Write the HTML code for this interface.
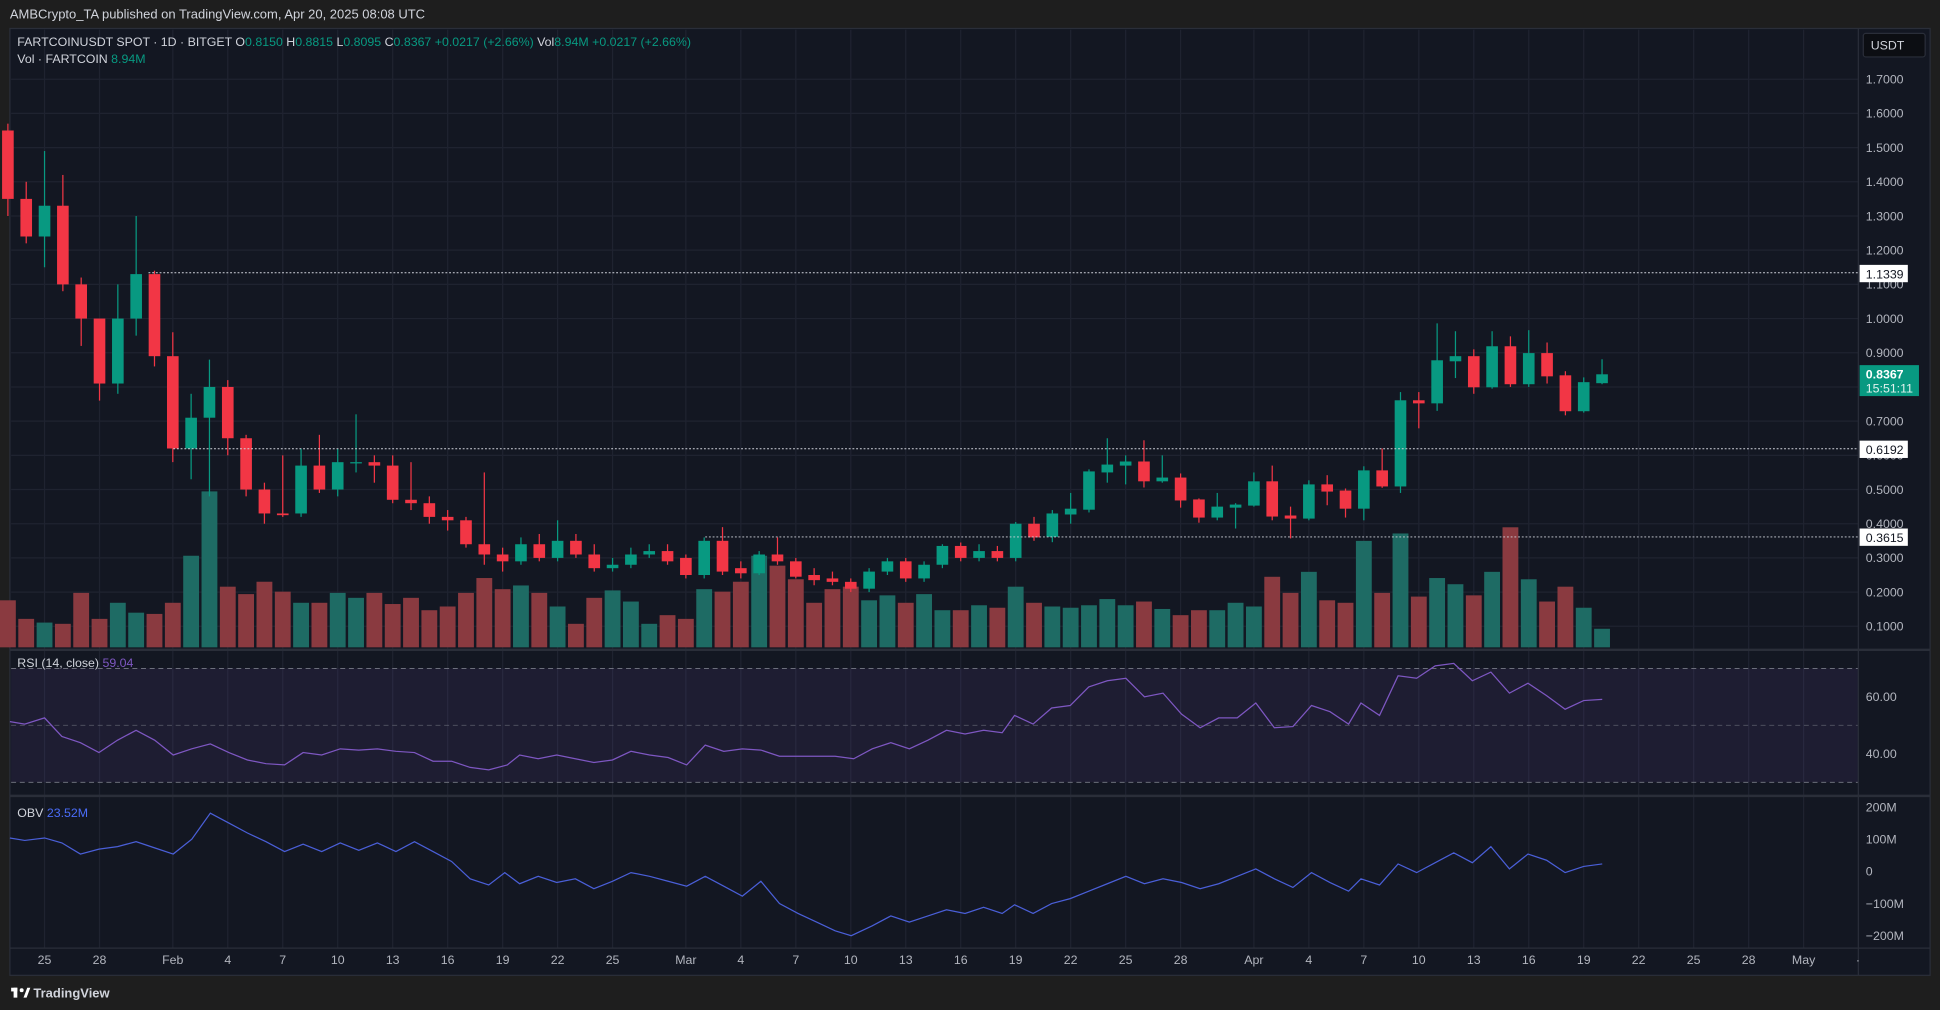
<!DOCTYPE html>
<html><head><meta charset="utf-8"><style>
html,body{margin:0;padding:0;background:#1e1e1e;overflow:hidden}
svg{display:block}
text{font-family:"Liberation Sans",sans-serif}
</style></head><body>
<svg id="s" width="1940" height="1010" viewBox="0 0 1568 816" preserveAspectRatio="none" xmlns="http://www.w3.org/2000/svg">
<rect x="0" y="0" width="1568" height="816" fill="#1e1e1e"/>
<text x="8" y="15" font-size="10.5" fill="#d1d4dc">AMBCrypto_TA published on TradingView.com, Apr 20, 2025 08:08 UTC</text>
<rect x="8" y="23" width="1552" height="765" fill="#131722" stroke="#2a2e39" stroke-width="1"/>
<g id="grid"></g>
<rect x="9" y="540" width="1493" height="92" fill="#7e57c2" fill-opacity="0.1"/>
<line x1="9" y1="540" x2="1502" y2="540" stroke="#787b86" stroke-dasharray="4,3" stroke-width="0.7"/>
<line x1="9" y1="586" x2="1502" y2="586" stroke="#787b86" stroke-dasharray="4,3" stroke-width="0.7" stroke-opacity="0.6"/>
<line x1="9" y1="632" x2="1502" y2="632" stroke="#787b86" stroke-dasharray="4,3" stroke-width="0.7"/>
<line x1="8" y1="525" x2="1560" y2="525" stroke="#2a2e39" stroke-width="2"/>
<line x1="8" y1="643" x2="1560" y2="643" stroke="#2a2e39" stroke-width="2"/>
<line x1="8" y1="766" x2="1560" y2="766" stroke="#2a2e39" stroke-width="1"/>
<line x1="1502" y1="23" x2="1502" y2="788" stroke="#2a2e39" stroke-width="1"/>
<g id="vol"></g>
<g id="cand"></g>
<line x1="120" y1="220.4" x2="1502" y2="220.4" stroke="#d1d4dc" stroke-dasharray="1.5,1.5" stroke-width="0.8"/>
<line x1="140" y1="362.6" x2="1502" y2="362.6" stroke="#d1d4dc" stroke-dasharray="1.5,1.5" stroke-width="0.8"/>
<line x1="570" y1="433.8" x2="1502" y2="433.8" stroke="#d1d4dc" stroke-dasharray="1.5,1.5" stroke-width="0.8"/>
<polyline id="rsi" fill="none" stroke="#7e57c2" stroke-width="1"/>
<polyline id="obv" fill="none" stroke="#4a5fd8" stroke-width="1"/>
<g id="axis" font-size="10" fill="#b2b5be"></g>
<rect x="1506" y="27" width="50" height="19" rx="2" fill="#0c0e13" stroke="#2a2e39"/>
<text x="1512" y="40" font-size="10" fill="#d1d4dc">USDT</text>
<rect x="1503" y="214" width="39" height="14" fill="#ffffff"/><text x="1508" y="225" font-size="10" fill="#131722">1.1339</text>
<rect x="1503" y="356" width="39" height="14" fill="#ffffff"/><text x="1508" y="367" font-size="10" fill="#131722">0.6192</text>
<rect x="1503" y="427" width="39" height="14" fill="#ffffff"/><text x="1508" y="438" font-size="10" fill="#131722">0.3615</text>
<rect x="1503" y="295" width="48" height="25" fill="#089981"/>
<text x="1508" y="306" font-size="10" fill="#fff" font-weight="bold">0.8367</text>
<text x="1508" y="317" font-size="10" fill="#e0f2ef">15:51:11</text>
<text x="14" y="37" font-size="10" fill="#d1d4dc">FARTCOINUSDT SPOT · 1D · BITGET <tspan>O</tspan><tspan fill="#089981">0.8150</tspan> H<tspan fill="#089981">0.8815</tspan> L<tspan fill="#089981">0.8095</tspan> C<tspan fill="#089981">0.8367</tspan> <tspan fill="#089981">+0.0217 (+2.66%)</tspan> Vol<tspan fill="#089981">8.94M</tspan> <tspan fill="#089981">+0.0217 (+2.66%)</tspan></text>
<text x="14" y="51" font-size="10" fill="#d1d4dc">Vol · FARTCOIN <tspan fill="#089981">8.94M</tspan></text>
<text x="14" y="539" font-size="10" fill="#d1d4dc">RSI (14, close) <tspan fill="#7e57c2">59.04</tspan></text>
<text x="14" y="660" font-size="10" fill="#d1d4dc">OBV <tspan fill="#4a6cf7">23.52M</tspan></text>
<g transform="translate(9,797)"><rect x="0" y="1" width="5" height="3" fill="#fff"/><rect x="2" y="1" width="3" height="8" fill="#fff"/><circle cx="8.5" cy="3" r="1.6" fill="#fff"/><path d="M10 9 L13 1 L15.5 1 L12.5 9Z" fill="#fff"/></g>
<text x="27" y="806" font-size="10.5" fill="#d1d4dc" font-weight="bold">TradingView</text>
</svg>
<script>
var NS="http://www.w3.org/2000/svg";
function el(p,t,a){var e=document.createElementNS(NS,t);for(var k in a)e.setAttribute(k,a[k]);document.getElementById(p).appendChild(e);return e;}
function py(p){return 506-(p-0.1)*276.25;}
function dx(d){return 36+d*14.81;}
for(var i=1;i<=17;i++){var p=i/10,y=py(p);el("grid","line",{x1:9,x2:1502,y1:y,y2:y,stroke:"#1f2330","stroke-width":1});
 var t=el("axis","text",{x:1508,y:y+3.5});t.textContent=p.toFixed(4);}
var dates=[[0,"25"],[3,"28"],[7,"Feb"],[10,"4"],[13,"7"],[16,"10"],[19,"13"],[22,"16"],[25,"19"],[28,"22"],[31,"25"],[35,"Mar"],[38,"4"],[41,"7"],[44,"10"],[47,"13"],[50,"16"],[53,"19"],[56,"22"],[59,"25"],[62,"28"],[66,"Apr"],[69,"4"],[72,"7"],[75,"10"],[78,"13"],[81,"16"],[84,"19"],[87,"22"],[90,"25"],[93,"28"],[96,"May"]];
dates.forEach(function(d){var x=dx(d[0]);el("grid","line",{x1:x,x2:x,y1:24,y2:766,stroke:"#1f2330","stroke-width":1});
 var t=el("axis","text",{x:x,y:779,"text-anchor":"middle"});t.textContent=d[1];});
var tt=el("axis","text",{x:1500,y:779});tt.textContent="·";
[[60,563],[40,609]].forEach(function(a){var t=el("axis","text",{x:1508,y:a[1]+3.5});t.textContent=a[0].toFixed(2);});
[["200M",652],["100M",678],["0",704],["−100M",730],["−200M",756]].forEach(function(a){var t=el("axis","text",{x:1508,y:a[1]+3.5});t.textContent=a[0];});
var C=[[1.55,1.35,1.57,1.30],[1.35,1.24,1.40,1.22],[1.24,1.33,1.49,1.15],[1.33,1.10,1.42,1.08],[1.10,1.00,1.12,0.92],[1.00,0.81,1.00,0.76],[0.81,1.00,1.10,0.78],[1.00,1.13,1.30,0.95],[1.13,0.89,1.14,0.86],
[0.89,0.62,0.96,0.58],[0.62,0.71,0.78,0.53],[0.71,0.80,0.88,0.48],[0.80,0.65,0.82,0.60],[0.65,0.50,0.66,0.48],[0.50,0.43,0.52,0.40],[0.43,0.425,0.60,0.42],[0.43,0.57,0.62,0.42],[0.57,0.50,0.66,0.49],[0.50,0.58,0.62,0.48],[0.58,0.58,0.72,0.55],[0.58,0.57,0.60,0.52],[0.57,0.47,0.60,0.46],[0.47,0.46,0.58,0.44],[0.46,0.42,0.48,0.40],[0.42,0.41,0.44,0.38],[0.41,0.34,0.42,0.33],[0.34,0.31,0.55,0.28],[0.31,0.29,0.33,0.26],[0.29,0.34,0.36,0.28],[0.34,0.30,0.37,0.29],[0.30,0.35,0.41,0.29],[0.35,0.31,0.37,0.30],[0.31,0.27,0.34,0.26],[0.27,0.28,0.30,0.26],[0.28,0.31,0.33,0.27],[0.31,0.32,0.34,0.30],[0.32,0.29,0.34,0.28],
[.30,.25,.31,.24],[.25,.35,.36,.24],[.35,.26,.39,.25],[.27,.255,.29,.24],[.255,.31,.32,.25],[.31,.29,.36,.28],[.29,.245,.30,.24],[.25,.235,.27,.22],[.24,.23,.26,.22],[.23,.21,.24,.20],[.21,.26,.27,.20],[.26,.29,.30,.25],[.29,.24,.30,.23],[.24,.28,.29,.23],[.28,.335,.34,.27],[.335,.30,.345,.29],[.30,.32,.34,.29],[.32,.30,.335,.29],[.30,.40,.405,.29],[.40,.36,.42,.35],
[.3615,.43,.44,.346],[.427,.444,.49,.40],[.441,.553,.559,.433],[.55,.573,.65,.52],[.57,.582,.60,.515],[.582,.524,.644,.506],[.524,.535,.60,.52],[.535,.468,.547,.447],[.471,.418,.474,.403],[.418,.45,.49,.41],[.447,.456,.46,.386],[.453,.524,.55,.45],[.524,.421,.57,.41],[.424,.415,.45,.357],[.415,.515,.527,.41],[.515,.494,.542,.454],[.497,.444,.503,.418],[.444,.556,.568,.41],[.556,.509,.62,.505],[.509,.761,.785,.49],
[.761,.752,.785,.679],[.752,.878,.986,.73],[.875,.890,.963,.826],[.890,.799,.91,.78],[.799,.919,.963,.795],[.919,.808,.948,.80],[.808,.899,.966,.80],[.899,.831,.93,.81],[.834,.729,.846,.717],[.729,.814,.828,.725],[.811,.837,.881,.808]];
var V=[38,23,20,19,44,23,36,28,27,36,74,126,49,43,53,45,36,36,44,40,44,35,40,30,33,44,56,47,50,44,33,19,40,46,37,19,26,23,47,45,53,74,66,55,36,47,49,38,42,36,43,30,30,34,32,49,36,33,32,34,39,34,37,31,26,30,30,36,33,57,44,61,38,36,86,44,92,41,56,51,42,61,97,55,37,49,32,15];
var n=C.length;
for(var i=0;i<n;i++){var d=i-2,x=dx(d),c=C[i],up=c[1]>=c[0];
 var v=V[i]!==undefined?V[i]:30;
 el("vol","rect",{x:x-6.4,y:523-v,width:12.8,height:v,fill:up?"#1e6b64":"#8a3a40"});
 var col=up?"#089981":"#f23645";
 el("cand","line",{x1:x,x2:x,y1:py(c[2]),y2:py(c[3]),stroke:col,"stroke-width":1});
 var t=py(Math.max(c[0],c[1])),b=py(Math.min(c[0],c[1]));
 el("cand","rect",{x:x-4.7,y:t,width:9.4,height:Math.max(b-t,1),fill:col});}
var R=[[8,583],[20,585],[36,580],[50,595],[65,600],[80,608],[95,598],[110,590],[125,598],[140,610],[155,605],[170,601],[185,608],[200,614],[215,617],[230,618],[245,608],[260,610],[275,605],[290,606],[305,605],[320,607],[335,608],[350,615],[365,615],[380,620],[395,622],[410,618],[420,610],[435,613],[450,610],[465,613],[480,616],[495,614],[510,607],[525,610],[540,612],[555,618],[570,602],[585,607],[600,605],[615,606],[630,611],[645,611],[660,611],[675,611],[690,613],[705,605],[720,600],[735,605],[750,598],[765,590],[780,593],[795,590],[810,592],[820,578],[835,585],[850,572],[865,570],[880,555],[895,550],[910,548],[925,563],[940,560],[955,577],[970,588],[985,580],[1000,580],[1015,568],[1030,588],[1045,587],[1060,570],[1075,575],[1090,585],[1100,568],[1115,578],[1130,546],[1145,548],[1160,538],[1175,536],[1190,550],[1205,543],[1220,560],[1235,552],[1250,562],[1265,573],[1280,566],[1295,565]];
var O=[[8,677],[20,679],[36,677],[50,681],[65,690],[80,686],[95,684],[110,680],[125,685],[140,690],[155,678],[170,657],[185,665],[200,673],[215,680],[230,688],[245,682],[260,688],[275,681],[290,687],[305,681],[320,688],[335,680],[350,688],[365,696],[380,710],[395,715],[408,705],[420,714],[435,708],[450,713],[465,710],[480,718],[495,712],[510,705],[525,708],[540,712],[555,716],[570,708],[585,716],[600,724],[615,712],[630,730],[645,738],[660,745],[675,752],[688,756],[705,748],[720,740],[735,745],[750,740],[765,735],[780,738],[795,733],[810,738],[820,731],[835,738],[850,730],[865,726],[880,720],[895,714],[910,708],[925,714],[940,710],[955,713],[970,718],[985,714],[1000,708],[1015,702],[1030,710],[1045,717],[1060,705],[1075,713],[1090,720],[1100,710],[1115,715],[1130,698],[1145,705],[1160,697],[1175,689],[1190,697],[1205,684],[1220,702],[1235,690],[1250,695],[1265,705],[1280,700],[1295,698]];
document.getElementById("rsi").setAttribute("points",R.map(function(p){return p.join(",")}).join(" "));
document.getElementById("obv").setAttribute("points",O.map(function(p){return p.join(",")}).join(" "));
</script>
</body></html>
